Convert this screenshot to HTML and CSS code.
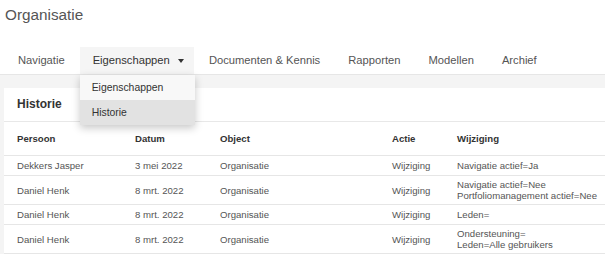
FILE: index.html
```html
<!DOCTYPE html>
<html lang="nl">
<head>
    <meta charset="UTF-8">
    <meta name="viewport" content="width=device-width, initial-scale=1.0">
    <title>Organisatie</title>
    <link rel="stylesheet" href="styles.css">
</head>
<body>

    <h1 class="page-title">Organisatie</h1>

    <ul class="tabs">
        <li class="tab">Navigatie</li>
        <li class="tab active">
            Eigenschappen <span class="caret"></span>
            <ul class="dropdown">
                <li class="dropdown-item">Eigenschappen</li>
                <li class="dropdown-item selected">Historie</li>
            </ul>
        </li>
        <li class="tab">Documenten &amp; Kennis</li>
        <li class="tab">Rapporten</li>
        <li class="tab">Modellen</li>
        <li class="tab">Archief</li>
    </ul>

    <div class="content">
        <div class="card">
            <div class="card-header">Historie</div>
            <table class="history">
                <colgroup>
                    <col class="col-persoon">
                    <col class="col-datum">
                    <col class="col-object">
                    <col class="col-actie">
                    <col>
                </colgroup>
                <thead>
                    <tr>
                        <th>Persoon</th>
                        <th>Datum</th>
                        <th>Object</th>
                        <th>Actie</th>
                        <th>Wijziging</th>
                    </tr>
                </thead>
                <tbody>
                    <tr>
                        <td>Dekkers Jasper</td>
                        <td>3 mei 2022</td>
                        <td>Organisatie</td>
                        <td>Wijziging</td>
                        <td>Navigatie actief=Ja</td>
                    </tr>
                    <tr>
                        <td>Daniel Henk</td>
                        <td>8 mrt. 2022</td>
                        <td>Organisatie</td>
                        <td>Wijziging</td>
                        <td>Navigatie actief=Nee<br>Portfoliomanagement actief=Nee</td>
                    </tr>
                    <tr>
                        <td>Daniel Henk</td>
                        <td>8 mrt. 2022</td>
                        <td>Organisatie</td>
                        <td>Wijziging</td>
                        <td>Leden=</td>
                    </tr>
                    <tr>
                        <td>Daniel Henk</td>
                        <td>8 mrt. 2022</td>
                        <td>Organisatie</td>
                        <td>Wijziging</td>
                        <td>Ondersteuning=<br>Leden=Alle gebruikers</td>
                    </tr>
                </tbody>
            </table>
        </div>
    </div>

</body>
</html>
```

FILE: styles.css
```css
body {
    margin: 0;
    font-family: 'Liberation Sans', Arial, sans-serif;
    color: #555;
    background-color: #fff;
    overflow: hidden;
}
.page-title {
    margin: 6px 0 0 5px;
    font-size: 15.3px;
    line-height: 18px;
    font-weight: normal;
    color: #555;
}
.tabs {
    display: flex;
    list-style: none;
    margin: 23px 0 0 0;
    padding: 0 0 0 5px;
    border-bottom: 1px solid #e6e6e6;
}
.tab {
    position: relative;
    padding: 0 13px;
    margin-right: 2px;
    font-size: 11.2px;
    line-height: 27px;
    color: #555;
    white-space: nowrap;
}
.tab.active {
    background-color: #f5f5f5;
    color: #333;
    padding-right: 10px;
}
.caret {
    display: inline-block;
    width: 0;
    height: 0;
    margin-left: 5px;
    vertical-align: middle;
    border-top: 4px solid #333;
    border-left: 3px solid transparent;
    border-right: 3px solid transparent;
}
.dropdown {
    position: absolute;
    top: 28px;
    left: 0;
    width: 115px;
    margin: 0;
    padding: 0;
    list-style: none;
    background-color: #f8f8f8;
    box-shadow: 0 3px 8px rgba(0, 0, 0, 0.22);
    z-index: 10;
}
.dropdown-item {
    padding: 0 12px;
    font-size: 10.4px;
    line-height: 25px;
    color: #333;
}
.dropdown-item.selected {
    background-color: #e2e2e2;
}
.content {
    background-color: #f4f4f4;
    padding: 13px 0 0 4px;
}
.card {
    background-color: #fff;
}
.card-header {
    padding-left: 13px;
    font-size: 12px;
    font-weight: bold;
    line-height: 33px;
    color: #333;
    border-bottom: 1px solid #e8e8e8;
}
.history {
    width: 100%;
    border-collapse: collapse;
    table-layout: fixed;
    font-size: 9.6px;
}
.col-persoon { width: 118px; }
.col-datum { width: 85px; }
.col-object { width: 172px; }
.col-actie { width: 65px; }
.history th {
    text-align: left;
    font-weight: bold;
    color: #333;
    line-height: 33px;
    padding: 0 0 0 13px;
    border-bottom: 1px solid #e6e6e6;
}
.history td {
    padding: 3px 0 3px 13px;
    line-height: 11px;
    vertical-align: middle;
    border-bottom: 1px solid #e6e6e6;
    white-space: nowrap;
}
.history tbody tr {
    height: 20px;
}
```
